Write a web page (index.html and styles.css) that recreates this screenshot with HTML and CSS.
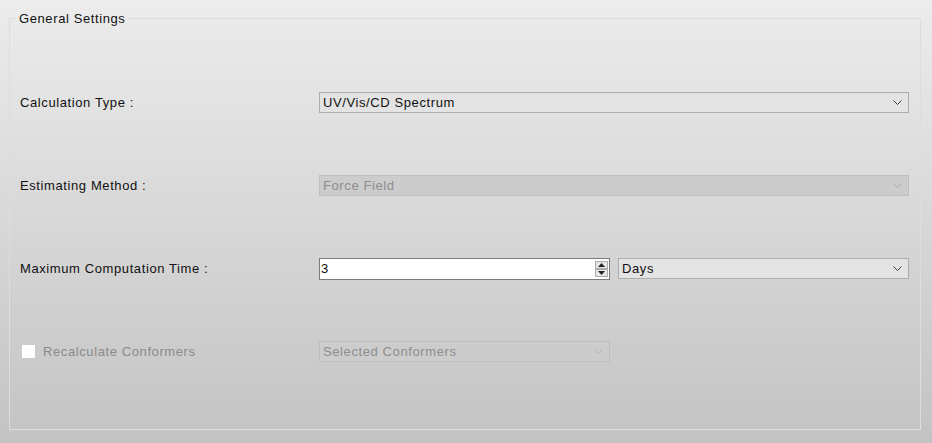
FILE: index.html
```html
<!DOCTYPE html>
<html>
<head>
<meta charset="utf-8">
<link rel="stylesheet" href="styles.css">
</head>
<body>
<fieldset class="group">
  <legend class="group-title">General Settings</legend>
  <div class="form">
    <div class="label">Calculation Type :</div>
    <div class="controls">
      <div class="combo wide">
        <span class="combo-text">UV/Vis/CD Spectrum</span>
        <svg class="chev" width="10" height="6" viewBox="0 0 10 6"><path d="M0.5 0.5 L4.5 4.5 L8.5 0.5" fill="none" stroke="#3a3a3a" stroke-width="1"/></svg>
      </div>
    </div>

    <div class="label">Estimating Method :</div>
    <div class="controls">
      <div class="combo wide disabled">
        <span class="combo-text">Force Field</span>
        <svg class="chev" width="10" height="6" viewBox="0 0 10 6"><path d="M0.5 0.5 L4.5 4.5 L8.5 0.5" fill="none" stroke="#a6a6a6" stroke-width="1"/></svg>
      </div>
    </div>

    <div class="label">Maximum Computation Time :</div>
    <div class="controls">
      <div class="spin">
        <span class="spin-text">3</span>
        <div class="spin-btns">
          <div class="spin-btn"><svg width="7" height="4" viewBox="0 0 7 4"><path d="M0 4 L3.5 0 L7 4Z" fill="#222"/></svg></div>
          <div class="spin-btn"><svg width="7" height="4" viewBox="0 0 7 4"><path d="M0 0 L3.5 4 L7 0Z" fill="#222"/></svg></div>
        </div>
      </div>
      <div class="combo">
        <span class="combo-text">Days</span>
        <svg class="chev" width="10" height="6" viewBox="0 0 10 6"><path d="M0.5 0.5 L4.5 4.5 L8.5 0.5" fill="none" stroke="#3a3a3a" stroke-width="1"/></svg>
      </div>
    </div>

    <div class="label check-label">
      <span class="checkbox"></span>
      <span class="muted">Recalculate Conformers</span>
    </div>
    <div class="controls">
      <div class="combo disabled">
        <span class="combo-text">Selected Conformers</span>
        <svg class="chev" width="10" height="6" viewBox="0 0 10 6"><path d="M0.5 0.5 L4.5 4.5 L8.5 0.5" fill="none" stroke="#b4b4b4" stroke-width="1"/></svg>
      </div>
    </div>
  </div>
</fieldset>
</body>
</html>
```

FILE: styles.css
```css
html, body {
  margin: 0;
  padding: 0;
}
body {
  width: 932px;
  height: 443px;
  overflow: hidden;
  background: linear-gradient(to bottom, #ececec 0%, #c3c3c3 100%);
  font-family: "Liberation Sans", Arial, sans-serif;
  font-size: 13px;
  letter-spacing: 0.6px;
  color: #111;
}
.group {
  margin: 11px 11px 0 9px;
  padding: 0 11px 36px 10px;
  border: 1px solid #dddddd;
  border-radius: 0;
}
.group-title {
  margin-left: -4px;
  padding: 0 3px;
  line-height: 15px;
  height: 15px;
}
.form {
  display: grid;
  grid-template-columns: 299px 1fr;
  grid-auto-rows: 83px;
  padding-top: 35px;
  align-items: center;
}
.label {
  display: flex;
  align-items: center;
  height: 21px;
}
.controls {
  display: grid;
  grid-template-columns: 1fr 1fr;
  column-gap: 8px;
  align-items: center;
}
.combo {
  display: flex;
  align-items: center;
  justify-content: space-between;
  height: 21px;
  box-sizing: border-box;
  border: 1px solid #adadad;
  background: #e3e3e3;
  padding: 0 5px 0 3px;
}
.combo.wide {
  grid-column: 1 / span 2;
}
.combo.disabled {
  background: #cccccc;
  border-color: #bfbfbf;
  color: #8d8d8d;
}
.chev {
  display: block;
}
.spin {
  display: flex;
  align-items: center;
  justify-content: space-between;
  height: 22px;
  box-sizing: border-box;
  border: 1px solid #7a7a7a;
  background: #fff;
  padding: 0 1px 0 1px;
}
.spin-btns {
  display: flex;
  flex-direction: column;
}
.spin-btn {
  width: 13px;
  height: 8px;
  box-sizing: border-box;
  border: 1px solid #acacac;
  background: #e6e6e6;
  display: flex;
  align-items: center;
  justify-content: center;
}
.check-label {
  gap: 8px;
  padding-left: 2px;
}
.checkbox {
  width: 13px;
  height: 13px;
  background: #fff;
  display: block;
}
.muted {
  color: #8a8a8a;
}
```
